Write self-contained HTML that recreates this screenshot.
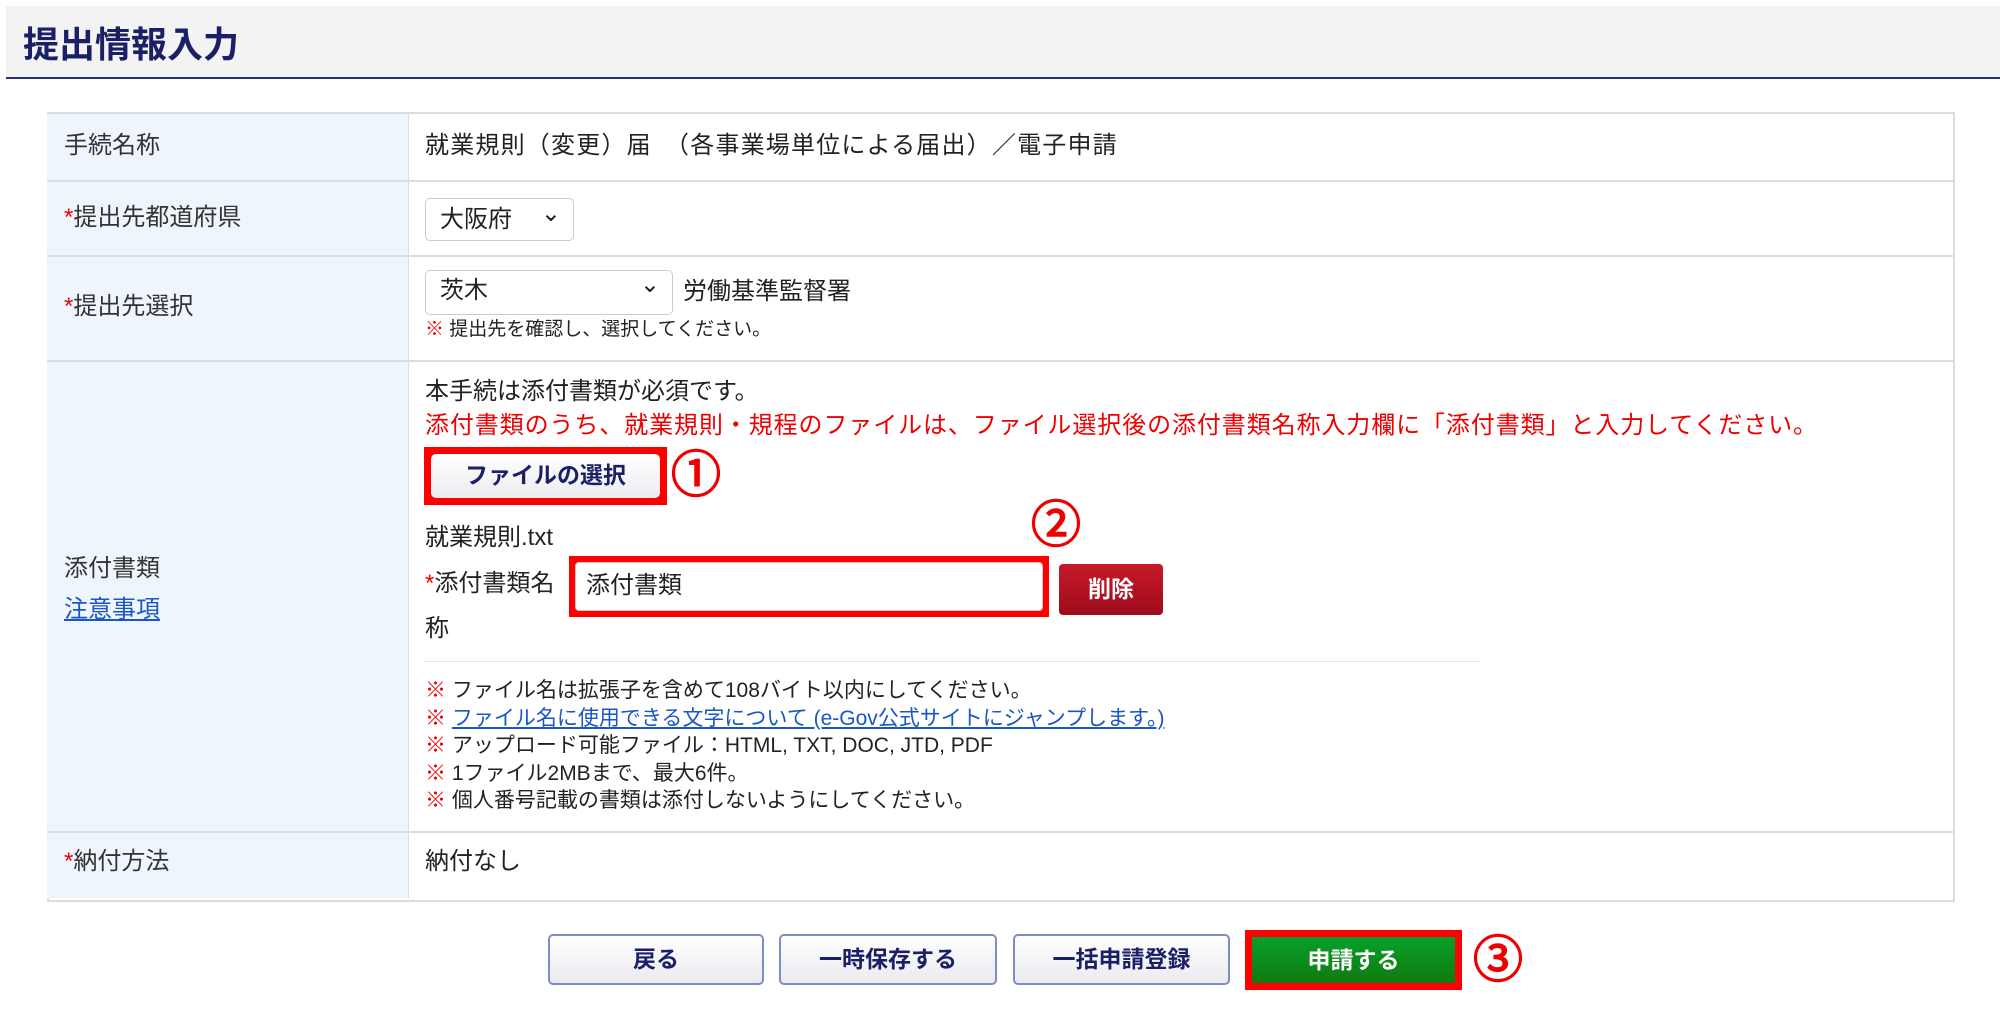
<!DOCTYPE html>
<html><head><meta charset="utf-8"><style>
body{margin:0;width:2000px;height:1033px;background:#fff;font-family:"Liberation Sans","Noto Sans CJK JP",sans-serif;color:#222;position:relative;overflow:hidden}
.a{position:absolute;white-space:nowrap}
.hd{left:6px;top:6px;width:1994px;height:71px;background:#f3f3f3;border-bottom:2px solid #2a2f7a}
.tt{left:23px;top:16px;font-size:36px;font-weight:bold;color:#1a1f66}
.tbl{left:47px;top:112px;width:1904px;height:786px;border:2px solid #ddd}
.lab{left:47px;width:361px;background:#eef5fd;border-right:1px solid #ddd}
.hl{left:47px;width:1906px;height:2px;background:#ddd}
.t{font-size:24px;line-height:30px}
.r{color:#e00}
.sel{background:#fff;border:1px solid #ccc;border-radius:5px;font-size:24px;box-sizing:border-box;padding-left:14px}
.sel:after{content:"⌄";position:absolute;right:12px;top:-6px;font-size:24px}
.btn{border:2px solid #7f8dc6;border-radius:5px;background:linear-gradient(#fff,#eaeaf0);font-size:23px;font-weight:bold;color:#1a1f66;text-align:center;box-sizing:border-box}
.n{font-size:21px;line-height:27.5px}
.n b{color:#e00;font-weight:bold}
.circ{font-size:50px;color:#e00;line-height:50px;-webkit-text-stroke:1.5px #e00}
</style></head><body>
<div class="a hd"></div>
<div class="a tt">提出情報入力</div>
<div class="a tbl"></div>
<div class="a lab" style="top:114px;height:784px"></div>
<div class="a hl" style="top:180px"></div>
<div class="a hl" style="top:255px"></div>
<div class="a hl" style="top:360px"></div>
<div class="a hl" style="top:831px"></div>

<div class="a t" style="left:64px;top:131px;color:#333">手続名称</div>
<div class="a t" style="left:425px;top:131px;letter-spacing:1.2px">就業規則（変更）届　（各事業場単位による届出）／電子申請</div>

<div class="a t" style="left:64px;top:203px;color:#333"><span class="r">*</span>提出先都道府県</div>
<div class="a sel" style="left:425px;top:198px;width:149px;height:43px;line-height:41px">大阪府</div>

<div class="a t" style="left:64px;top:292px;color:#333"><span class="r">*</span>提出先選択</div>
<div class="a sel" style="left:425px;top:270px;width:248px;height:45px;line-height:40px">茨木</div>
<div class="a t" style="left:683px;top:277px">労働基準監督署</div>
<div class="a n" style="left:425px;top:316px;font-size:19px"><b>※</b> 提出先を確認し、選択してください。</div>

<div class="a t" style="left:64px;top:554px;color:#333">添付書類</div>
<div class="a t" style="left:64px;top:595px;color:#1a56c8;text-decoration:underline">注意事項</div>

<div class="a t" style="left:425px;top:377px">本手続は添付書類が必須です。</div>
<div class="a t r" style="left:425px;top:411px;letter-spacing:0.9px">添付書類のうち、就業規則・規程のファイルは、ファイル選択後の添付書類名称入力欄に「添付書類」と入力してください。</div>
<div class="a" style="left:424px;top:447px;width:243px;height:58px;background:#f00"></div>
<div class="a btn" style="left:431px;top:454px;width:229px;height:44px;line-height:42px;border:none;background:linear-gradient(#fff,#ececf0)">ファイルの選択</div>
<div class="a circ" style="left:671px;top:450px">①</div>

<div class="a circ" style="left:1031px;top:500px">②</div>
<div class="a t" style="left:425px;top:523px">就業規則.txt</div>
<div class="a t" style="left:425px;top:569px"><span class="r">*</span>添付書類名</div>
<div class="a" style="left:569px;top:556px;width:480px;height:61px;background:#f00"></div>
<div class="a" style="left:575px;top:562px;width:468px;height:49px;background:#fff;border:1px solid #ccc;border-radius:4px;box-sizing:border-box"></div>
<div class="a t" style="left:586px;top:571px">添付書類</div>
<div class="a" style="left:1059px;top:564px;width:104px;height:51px;background:linear-gradient(#c8182a,#9c0c1a);border-radius:4px;color:#fff;font-size:23px;font-weight:bold;text-align:center;line-height:51px">削除</div>
<div class="a t" style="left:425px;top:614px">称</div>
<div class="a" style="left:425px;top:661px;width:1055px;border-top:1px dotted #ccc"></div>
<div class="a n" style="left:425px;top:677px"><b>※</b> ファイル名は拡張子を含めて108バイト以内にしてください。<br><b>※</b> <span style="color:#1a56c8;text-decoration:underline">ファイル名に使用できる文字について (e-Gov公式サイトにジャンプします。)</span><br><b>※</b> アップロード可能ファイル：HTML, TXT, DOC, JTD, PDF<br><b>※</b> 1ファイル2MBまで、最大6件。<br><b>※</b> 個人番号記載の書類は添付しないようにしてください。</div>

<div class="a t" style="left:64px;top:847px;color:#333"><span class="r">*</span>納付方法</div>
<div class="a t" style="left:425px;top:847px">納付なし</div>

<div class="a btn" style="left:548px;top:934px;width:216px;height:51px;line-height:47px">戻る</div>
<div class="a btn" style="left:779px;top:934px;width:218px;height:51px;line-height:47px">一時保存する</div>
<div class="a btn" style="left:1013px;top:934px;width:217px;height:51px;line-height:47px">一括申請登録</div>
<div class="a" style="left:1245px;top:930px;width:217px;height:60px;background:#f00"></div>
<div class="a" style="left:1252px;top:937px;width:203px;height:46px;background:linear-gradient(#08a02a,#107a10);color:#fff;font-size:23px;font-weight:bold;text-align:center;line-height:46px">申請する</div>
<div class="a circ" style="left:1473px;top:935px">③</div>
</body></html>
